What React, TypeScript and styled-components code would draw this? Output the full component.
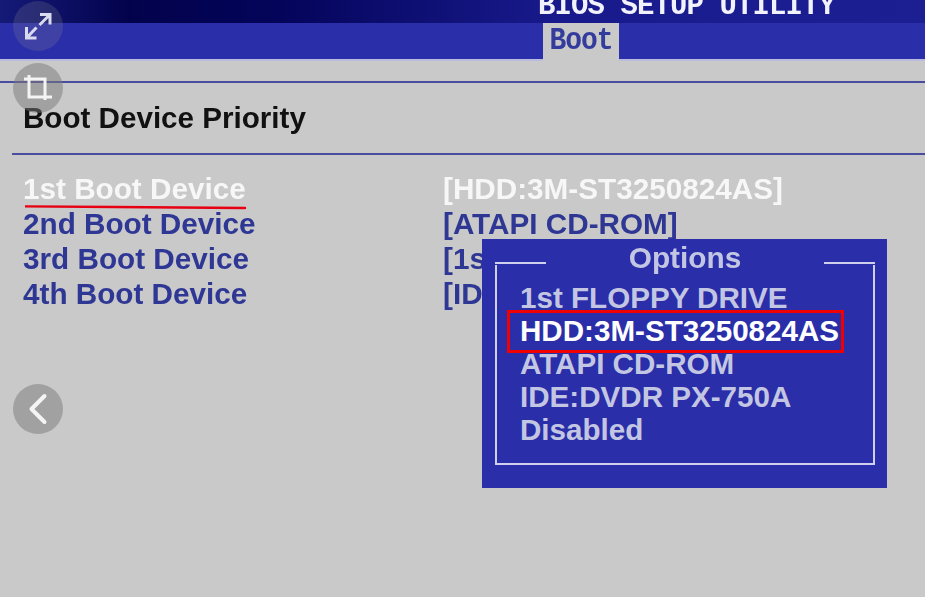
import styled, { createGlobalStyle } from 'styled-components';
import { ChevronLeft } from 'lucide-react';

const GlobalStyle = createGlobalStyle`
  html, body {
    margin: 0;
    height: 100%;
    background: #c9c9c9;
    overflow: hidden;
  }
`;

const Page = styled.div`
  position: relative;
  width: 925px;
  height: 597px;
  overflow: hidden;
  background: #c9c9c9;
  font-family: 'Liberation Sans', Arial, sans-serif;
  font-weight: 700;
`;

const TitleBar = styled.div`
  height: 23px;
  overflow: hidden;
  display: flex;
  align-items: flex-end;
  padding-left: 538px;
  background: linear-gradient(90deg, #151a78 0%, #02024c 14%, #04045a 30%, #181a8c 60%, #1c1f92 100%);
`;

const BiosTitle = styled.span`
  font-family: 'Liberation Mono', monospace;
  font-size: 29px;
  line-height: 24px;
  letter-spacing: -0.9px;
  white-space: pre;
  color: #f1f2fb;
  margin-bottom: 4px;
  filter: blur(0.4px);
`;

const TabBar = styled.div`
  height: 36px;
  display: flex;
  padding-left: 543px;
  background: #2a2ea8;
  border-bottom: 2px solid #b9bbdf;
`;

const Tab = styled.div`
  width: 76px;
  height: 38px;
  text-align: center;
  background: #c9c9c9;
  color: #333c9c;
`;

const TabLabel = styled.div`
  font-family: 'Liberation Mono', monospace;
  font-size: 28px;
  line-height: 35px;
  letter-spacing: -1px;
  transform: scaleY(1.12);
  filter: blur(0.3px);
`;

const Rule = styled.div<{ $inset?: number }>`
  height: 2px;
  margin-left: ${(p) => p.$inset ?? 0}px;
  background: #4a4d9f;
`;

const Content = styled.div`
  padding-top: 20px;
`;

const Heading = styled.h1`
  margin: 0;
  padding: 18px 0 19px 23px;
  height: 33px;
  font-size: 29.6px;
  line-height: 33px;
  font-weight: 700;
  color: #111111;
  filter: blur(0.3px);
`;

const DeviceList = styled.div`
  padding: 16px 0 0 23px;
  display: grid;
  grid-template-columns: 420px 1fr;
  grid-auto-rows: 35px;
`;

const Cell = styled.div<{ $active?: boolean }>`
  position: relative;
  font-size: 29.7px;
  line-height: 35px;
  white-space: nowrap;
  color: ${(p) => (p.$active ? '#f7f7f7' : '#2f3795')};
  filter: blur(0.35px);
`;

const Underline = styled.svg`
  position: absolute;
  left: 25px;
  top: 204px;
`;

const OptionsPopup = styled.div`
  position: absolute;
  left: 482px;
  top: 239px;
  width: 405px;
  height: 249px;
  box-sizing: border-box;
  padding: 0 12px 23px 13px;
  background: #2a2ea8;
  display: flex;
  flex-direction: column;
`;

const FrameHeader = styled.div`
  display: flex;
  justify-content: space-between;
  height: 38px;
  margin-bottom: -12px;
`;

const FrameEdge = styled.div`
  width: 51px;
  height: 2px;
  margin-top: 23px;
  background: #ced0ee;
`;

const OptionsTitle = styled.div`
  font-size: 29.8px;
  line-height: 38px;
  color: #c3c6e2;
  filter: blur(0.3px);
`;

const Frame = styled.div`
  flex: 1;
  padding: 16px 0 0 23px;
  border: 2px solid #ced0ee;
  border-top: none;
`;

const Option = styled.div<{ $selected?: boolean }>`
  position: relative;
  height: 33px;
  font-size: 29.6px;
  line-height: 33px;
  white-space: nowrap;
  color: ${(p) => (p.$selected ? '#ffffff' : '#c3c6e2')};

  ${(p) =>
    p.$selected &&
    `
    &::after {
      content: '';
      position: absolute;
      left: -13px;
      top: -4px;
      width: 337px;
      height: 43px;
      box-sizing: border-box;
      border: 3px solid #f00000;
    }
  `}
`;

const OverlayButton = styled.div<{ $top: number; $dim?: boolean }>`
  position: absolute;
  left: 13px;
  top: ${(p) => p.$top}px;
  width: 50px;
  height: 50px;
  border-radius: 50%;
  background: ${(p) => (p.$dim ? 'rgba(150, 150, 150, 0.2)' : 'rgba(122, 122, 122, 0.5)')};
  color: #f4f4f4;
  display: flex;
  align-items: center;
  justify-content: center;

  svg {
    flex-shrink: 0;
  }
`;

const devices = [
  ['1st Boot Device', '[HDD:3M-ST3250824AS]'],
  ['2nd Boot Device', '[ATAPI CD-ROM]'],
  ['3rd Boot Device', '[1st FLOPPY DRIVE]'],
  ['4th Boot Device', '[IDE:DVDR PX-750A]'],
];

const options = ['1st FLOPPY DRIVE', 'HDD:3M-ST3250824AS', 'ATAPI CD-ROM', 'IDE:DVDR PX-750A', 'Disabled'];

const ExpandIcon = () => (
  <svg width="28" height="28" viewBox="0 0 28 28" fill="none" stroke="#d9daf0" strokeWidth="3">
    <path d="M16 2.5h10v10M26 2.5L15.5 13" />
    <path d="M2.5 15v11h10M2.5 26L12.5 15.5" />
  </svg>
);

const CropIcon = () => (
  <svg width="30" height="30" viewBox="0 0 30 30" fill="none" stroke="#f4f4f4" strokeWidth="3">
    <path d="M6 2V24H29" />
    <path d="M1 6H22V27" />
  </svg>
);

const App = () => (
  <Page>
    <GlobalStyle />
    <TitleBar>
      <BiosTitle>BIOS SETUP UTILITY</BiosTitle>
    </TitleBar>
    <TabBar>
      <Tab>
        <TabLabel>Boot</TabLabel>
      </Tab>
    </TabBar>
    <Content>
      <Rule />
      <Heading>Boot Device Priority</Heading>
      <Rule $inset={12} />
      <DeviceList>
        {devices.map(([name, value], i) => (
          <>
            <Cell key={name} $active={i === 0}>
              {name}
            </Cell>
            <Cell key={value} $active={i === 0}>
              {value}
            </Cell>
          </>
        ))}
      </DeviceList>
    </Content>
    <Underline width="222" height="6" viewBox="0 0 222 6">
      <path d="M0 2.4 L90 3 L220 4" stroke="#e60012" strokeWidth="2.4" strokeLinecap="round" fill="none" />
    </Underline>
    <OptionsPopup>
      <FrameHeader>
        <FrameEdge />
        <OptionsTitle>Options</OptionsTitle>
        <FrameEdge />
      </FrameHeader>
      <Frame>
        {options.map((option) => (
          <Option key={option} $selected={option.startsWith('HDD')}>
            {option}
          </Option>
        ))}
      </Frame>
    </OptionsPopup>
    <OverlayButton $top={1} $dim>
      <ExpandIcon />
    </OverlayButton>
    <OverlayButton $top={63}>
      <CropIcon />
    </OverlayButton>
    <OverlayButton $top={384}>
      <ChevronLeft size={52} strokeWidth={4} absoluteStrokeWidth />
    </OverlayButton>
  </Page>
);

export default App;
